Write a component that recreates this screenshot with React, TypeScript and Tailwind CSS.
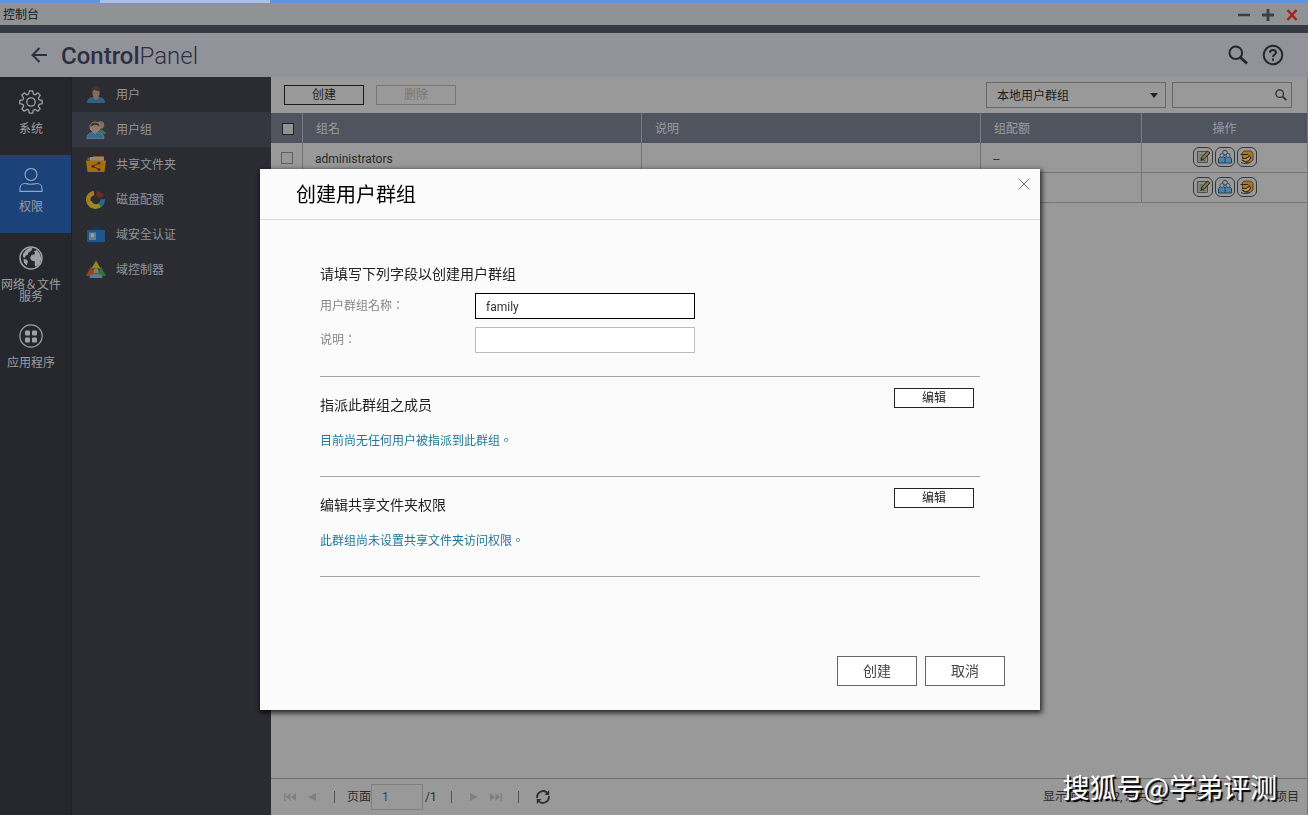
import React from 'react';
import clsx from 'clsx';

const GearIcon = () => (
  <svg viewBox="0 0 24 24" className="w-6 h-6" fill="none" stroke="#a0a1a4" strokeWidth="1.3" strokeLinejoin="round">
    <path d="M10.300.8h3.400l.6 3.200 1.800.8 2.700-1.900 2.400 2.400-1.900 2.700.8 1.800 3.100.6v3.300l-3.100.6-.8 1.800 1.900 2.700-2.400 2.400-2.700-1.900-1.800.8-.6 3.100h-3.400l-.6-3.100-1.800-.8-2.700 1.900-2.400-2.400 1.900-2.700-.8-1.800-3.100-.6v-3.300l3.100-.6.8-1.800-1.900-2.700 2.400-2.400 2.700 1.900 1.800-.8z" />
    <circle cx="12" cy="12" r="4.200" />
  </svg>
);

const PersonIcon = () => (
  <svg viewBox="0 0 24 24" className="w-6 h-6" fill="none" stroke="#93a5c4" strokeWidth="1.1">
    <circle cx="12" cy="6.5" r="6" />
    <path d="M1 23.4v-2.9c0-3 2.2-5 5-5 2 0 3.200.8 6 .8s4-.8 6-.8c2.800 0 5 2 5 5v2.900z" strokeLinejoin="round" />
  </svg>
);

const GlobeIcon = () => (
  <svg viewBox="0 0 24 24" className="w-6 h-6">
    <circle cx="12" cy="12" r="11" fill="none" stroke="#a0a1a4" strokeWidth="1.5" />
    <path d="M4 8 7 4l4-2.500 2.500 1L12 5 9.500 6.500 8.500 9 7 9.500 5.500 12 4 11z" fill="#a0a1a4" />
    <path d="M4.500 13l3 .5 1.500 2-1.500 4-2.500-3z" fill="#a0a1a4" />
    <path d="M14.500 5.500 18 4l3 4 1.500 5-2 5-3.500 3-1.500-2.500.5-3-3.500-1-1.500-2.500 1.500-3 3-.5.5-2z" fill="#a0a1a4" />
  </svg>
);

const AppsIcon = () => (
  <svg viewBox="0 0 24 24" className="w-6 h-6" fill="#a0a1a4">
    <circle cx="12" cy="12" r="11.200" fill="none" stroke="#a0a1a4" strokeWidth="1.200" />
    <rect x="6" y="6.500" width="5" height="5" rx="1" />
    <rect x="13" y="6.500" width="5" height="5" rx="1" />
    <rect x="6" y="13.500" width="5" height="5" rx="1" />
    <rect x="13" y="13.500" width="5" height="5" rx="1" />
  </svg>
);

const UserIcon = () => (
  <svg viewBox="0 0 20 20" className="w-5 h-5">
    <path d="M1 18c0-4 2-5.500 6-6h6c4 .5 6 2 6 6z" fill="#2f5f85" />
    <path d="M7.500 10.500h5v3L10 15l-2.500-1.500z" fill="#84685a" />
    <ellipse cx="10" cy="8" rx="3.600" ry="4.500" fill="#866b5c" />
    <path d="M5.500 8C5.500 3 7 1 10 1s4.500 2 4.500 7l-1-2C11 6 9 5.500 8 4.500L6.500 6.500z" fill="#43352e" />
  </svg>
);

const UserGroupIcon = () => (
  <svg viewBox="0 0 20 20" className="w-5 h-5">
    <circle cx="14.500" cy="5" r="3.800" fill="#86705d" />
    <path d="M12 9.500h4.500l4 4-3 1-5-2z" fill="#49684a" />
    <path d="M1 18.500c0-4 2-5.500 5.500-6H12c4 .5 6 2 6 6z" fill="#346c94" stroke="#7a8b95" strokeWidth=".6" />
    <circle cx="9" cy="7" r="5" fill="#94796a" stroke="#8f8f8a" />
    <path d="M4.500 7C4.500 3.500 6 2.500 9 2.500s4.500 1 4.500 4.500L12 5.500 8 5z" fill="#473a30" />
    <path d="M7 12h4l-2 2.500z" fill="#94796a" />
  </svg>
);

const ShareFolderIcon = () => (
  <svg viewBox="0 0 20 20" className="w-5 h-5">
    <path d="M1.500 2.500h5l1-1.500h10v4h-16z" fill="#865a13" />
    <path d="M4 2h14v4H4z" fill="#8d8982" />
    <path d="M0 5.500h20L18.500 17h-17z" fill="#a07013" />
    <path d="m13 8-6 3.300 6 3.200" fill="none" stroke="#5f2b18" />
    <circle cx="13" cy="8" r="1.500" fill="#5f2b18" />
    <circle cx="7" cy="11.300" r="1.600" fill="#5f2b18" />
    <circle cx="13" cy="14.500" r="1.500" fill="#5f2b18" />
  </svg>
);

const QuotaIcon = () => (
  <svg viewBox="0 0 20 20" className="w-5 h-5" fill="none" strokeWidth="4.500">
    <path d="M10 16.500A6.800 6.800 0 0 1 8 3" stroke="#a67c1c" />
    <path d="M3.500 11.500a6.800 6.800 0 0 0 10.500 3.700" stroke="#998a20" />
    <path d="M14 15.200a6.500 6.500 0 0 0 2.600-6" stroke="#25688a" />
    <path d="M10.500 3.500A6 6 0 0 1 15.500 7" stroke="#6e2d24" />
  </svg>
);

const DomainSecurityIcon = () => (
  <svg viewBox="0 0 20 20" className="w-5 h-5">
    <path d="M3 4l7-3.500L17 4v13l-7 2.500L3 17z" fill="#193350" />
    <rect x="1" y="5" width="18" height="12" rx="1" fill="#1d5688" />
    <rect x="3" y="7.500" width="7" height="7.500" fill="#687f90" />
    <rect x="5" y="8.500" width="3" height="3.500" fill="#93a1a9" />
  </svg>
);

const DomainControllerIcon = () => (
  <svg viewBox="0 0 20 20" className="w-5 h-5">
    <path d="M10 .5l4.500 8h-9z" fill="#958a20" />
    <path d="M5 6.500l5 9.500H0z" fill="#8f4822" />
    <path d="M15 6.500l5 9.500H10z" fill="#31733a" />
    <path d="M3.500 18c0-3 2-4 4-4h5c2 0 4 1 4 4z" fill="#5a7a8f" />
    <circle cx="10" cy="11" r="2.600" fill="#927868" />
  </svg>
);

const SearchIcon = ({ className }: { className: string }) => (
  <svg viewBox="0 0 20 20" className={className} fill="none" stroke="currentColor">
    <circle cx="7.800" cy="7.800" r="6.300" strokeWidth="2" />
    <path d="m12.500 12.500 6.500 6" strokeWidth="2.800" />
  </svg>
);

const EditIcon = () => (
  <svg viewBox="0 0 16 16" className="w-4 h-4">
    <path d="M2.500 2.500h10v11h-10z" fill="#868a82" stroke="#4b5048" />
    <path d="M4.500 6h3m-3 3h2m-2 2.500h6" stroke="#4f6b45" />
    <path d="m6 11 .8-3L12.500 2 15 4 9.300 10z" fill="#857148" stroke="#26261f" />
  </svg>
);

const MembersIcon = () => (
  <svg viewBox="0 0 16 16" className="w-4 h-4">
    <circle cx="8" cy="3.700" r="2.400" fill="#a39787" stroke="#34404a" />
    <path d="M1.500 14v-4.500l2-2h3L8 9l1.500-1.500h3l2 2V14z" fill="#4d83a8" stroke="#23435f" />
    <circle cx="5" cy="6.500" r="2" fill="#97a0a1" stroke="#23435f" strokeWidth=".8" />
    <circle cx="11" cy="6.500" r="2" fill="#97a0a1" stroke="#23435f" strokeWidth=".8" />
    <path d="M8 9v5" stroke="#23435f" />
  </svg>
);

const FolderHandIcon = () => (
  <svg viewBox="0 0 16 16" className="w-4 h-4">
    <path d="M3 4 5 2h7l2 2.500V11l-3 2.500H7L4 12z" fill="#a8742a" stroke="#4a3313" strokeWidth=".8" />
    <path d="M1.500 5.500H9L10.500 7M3 9.500h4l3-2 2 1-2.500 3.500-3 .5-4-1.500" fill="#b39a68" stroke="#2d2413" />
    <path d="M2 13.500c3 1.500 6 1.500 9 0" fill="none" stroke="#333" />
  </svg>
);

const categories = [
  { label: '系统', icon: <GearIcon /> },
  { label: '权限', icon: <PersonIcon />, active: true },
  { label: '网络＆文件服务', icon: <GlobeIcon /> },
  { label: '应用程序', icon: <AppsIcon /> },
];

const menuItems = [
  { label: '用户', icon: <UserIcon /> },
  { label: '用户组', icon: <UserGroupIcon />, active: true },
  { label: '共享文件夹', icon: <ShareFolderIcon /> },
  { label: '磁盘配额', icon: <QuotaIcon /> },
  { label: '域安全认证', icon: <DomainSecurityIcon /> },
  { label: '域控制器', icon: <DomainControllerIcon /> },
];

const groups = [
  { name: 'administrators', quota: '--' },
  { name: 'everyone', quota: '--' },
];

const actions = [
  { label: '编辑', icon: <EditIcon /> },
  { label: '成员', icon: <MembersIcon /> },
  { label: '共享文件夹', icon: <FolderHandIcon /> },
];

const TitleBar = () => (
  <>
    <div className="h-[3px] bg-[#5f96d8] flex">
      <div className="ml-[100px] w-[170px] bg-[#a9c0ea]" />
    </div>
    <div className="h-[22px] bg-[#8f9393] flex items-center justify-between pt-0.5 pl-[3px] pr-2.5 text-[#16181c]">
      <span>控制台</span>
      <div className="flex items-center gap-3">
        <button aria-label="最小化">
          <svg viewBox="0 0 12 12" className="w-3 h-3"><path d="M0 6h12" stroke="#3c3e44" strokeWidth="2.500" /></svg>
        </button>
        <button aria-label="最大化">
          <svg viewBox="0 0 12 12" className="w-3 h-3"><path d="M0 6h12M6 0v12" stroke="#3c3e44" strokeWidth="2.800" /></svg>
        </button>
        <button aria-label="关闭">
          <svg viewBox="0 0 12 12" className="w-3 h-3"><path d="m1.500 1 9 10m0-10-9 10" stroke="#a3221c" strokeWidth="2.400" /></svg>
        </button>
      </div>
    </div>
    <div className="h-2 bg-[#363a45]" />
  </>
);

const Header = () => (
  <header className="h-11 bg-[#92929b] flex items-center justify-between pl-[31px] pr-6 text-[#2c303d]">
    <div className="flex items-center gap-3.5">
      <button aria-label="返回">
        <svg viewBox="0 0 16 16" className="w-4 h-4" fill="none" stroke="currentColor" strokeWidth="2">
          <path d="M16 8H1.500M8.500 1l-7 7 7 7" />
        </svg>
      </button>
      <h1 className="pt-0.5 font-['Roboto',sans-serif] text-2xl font-light">
        <span className="font-medium">Control</span>Panel
      </h1>
    </div>
    <div className="flex items-center gap-3.5 text-[#23262e]">
      <button aria-label="搜索"><SearchIcon className="w-5 h-5" /></button>
      <button aria-label="帮助">
        <svg viewBox="0 0 22 22" className="w-[22px] h-[22px]" fill="none" stroke="currentColor" strokeWidth="2">
          <circle cx="11" cy="11" r="9.300" />
          <path d="M8 8.800c0-1.800 1.200-2.800 3-2.800s3 1 3 2.500c0 2-3 2.200-3 4.500M11 14.500v2.200" />
        </svg>
      </button>
    </div>
  </header>
);

const Sidebar = () => (
  <>
    <nav className="w-[72px] shrink-0 bg-[#26272c] border-r border-[#212227]">
      {categories.map((item) => (
        <a
          key={item.label}
          href="#"
          className={clsx(
            'h-[78px] flex flex-col items-center pt-[13px] pr-[9px] text-[#9c9da0]',
            item.active && 'bg-[#1c427a]'
          )}
        >
          {item.icon}
          <span className="mt-[9px] w-[62px] text-center leading-3">{item.label}</span>
        </a>
      ))}
    </nav>
    <nav className="w-[199px] shrink-0 bg-[#2b2c32]">
      {menuItems.map((item) => (
        <a
          key={item.label}
          href="#"
          className={clsx(
            'h-[35px] flex items-center gap-2.5 pl-3.5 text-[#929397]',
            item.active && 'bg-[#343740]'
          )}
        >
          {item.icon}
          {item.label}
        </a>
      ))}
    </nav>
  </>
);

const Toolbar = () => (
  <div className="h-9 shrink-0 flex items-center justify-between pl-[13px] pr-[15px]">
    <div className="flex gap-3">
      <button className="w-20 h-5 border border-[#1c1c1c] text-[#222] flex items-center justify-center">创建</button>
      <button disabled className="w-20 h-5 border border-[#777] text-[#777] flex items-center justify-center">删除</button>
    </div>
    <div className="flex gap-1.5">
      <div className="relative">
        <select aria-label="群组类型" className="appearance-none w-[180px] h-[26px] border border-[#686868] pl-2.5 pt-px text-[#1b1b1b]">
          <option>本地用户群组</option>
        </select>
        <svg viewBox="0 0 8 5" className="absolute right-2 top-[11px] w-2 h-[5px] pointer-events-none"><path d="M0 0h8L4 5z" fill="#222" /></svg>
      </div>
      <div className="w-[120px] h-[26px] border border-[#686868] flex items-center pr-1">
        <input type="search" aria-label="搜索群组" className="min-w-0 flex-1 px-2 outline-none" />
        <SearchIcon className="w-3 h-3 text-[#23262e]" />
      </div>
    </div>
  </div>
);

const thClass = 'h-[30px] p-0 pt-0.5 pl-[13px] border-l border-[#777b83] font-normal text-left';
const tdClass = 'h-[30px] p-0 pt-0.5 pl-3 border-l border-[#757575]';

const GroupTable = () => (
  <table className="w-full table-fixed border-separate border-spacing-0">
    <colgroup>
      <col className="w-[31px]" />
      <col />
      <col />
      <col className="w-[161px]" />
      <col className="w-[166px]" />
    </colgroup>
    <thead className="bg-[#4f545f] text-[#9b9da1]">
      <tr>
        <th className="p-0">
          <div className="flex justify-center pt-px pl-0.5">
            <input type="checkbox" aria-label="全选" className="appearance-none w-3 h-3 bg-[#929292] border border-[#202227]" />
          </div>
        </th>
        <th className={thClass}>组名</th>
        <th className={thClass}>说明</th>
        <th className={thClass}>组配额</th>
        <th className="h-[30px] p-0 pt-0.5 border-l border-[#777b83] font-normal text-center">操作</th>
      </tr>
    </thead>
    <tbody className="text-[#292929]">
      {groups.map((group) => (
        <tr key={group.name} className="[&>td]:border-b [&>td]:border-[#757575]">
          <td className="p-0">
            <div className="flex justify-center">
              <input type="checkbox" aria-label={group.name} className="appearance-none w-3 h-3 border border-[#5f5f5f]" />
            </div>
          </td>
          <td className={tdClass}>{group.name}</td>
          <td className={tdClass} />
          <td className={tdClass}>{group.quota}</td>
          <td className="h-[30px] p-0 pb-0.5 border-l border-[#757575]">
            <div className="flex justify-center gap-0.5">
              {actions.map((action) => (
                <button
                  key={action.label}
                  aria-label={action.label}
                  className="w-5 h-5 rounded-md border border-[#34373c] flex items-center justify-center"
                >
                  {action.icon}
                </button>
              ))}
            </div>
          </td>
        </tr>
      ))}
    </tbody>
  </table>
);

const Separator = () => <span className="w-px h-3 bg-[#555]" />;

const Pager = () => (
  <footer className="relative shrink-0 h-[37px] border-t border-[#6c6c6c] flex items-center justify-between pl-[13px] pr-2 text-[#2b2b2b]">
    <div className="flex items-center">
      <button disabled aria-label="第一页" className="text-[#808080]">
        <svg viewBox="0 0 12 10" className="w-3 h-2.5" fill="currentColor"><path d="M0 1h1.500v8H0zM6.500 1v8L2 5zM12 1v8L7 5z" /></svg>
      </button>
      <button disabled aria-label="上一页" className="ml-3 mr-[18px] text-[#808080]">
        <svg viewBox="0 0 8 10" className="w-2 h-2.5" fill="currentColor"><path d="M8 1v8L0 5z" /></svg>
      </button>
      <Separator />
      <label htmlFor="page" className="ml-3">页面</label>
      <input id="page" defaultValue="1" className="w-[52px] h-[26px] border border-[#808080] pl-2.5 text-[#1d4d70]" />
      <span className="ml-0.5 mr-3.5">/1</span>
      <Separator />
      <button disabled aria-label="下一页" className="ml-[18px] text-[#808080]">
        <svg viewBox="0 0 8 10" className="w-2 h-2.5" fill="currentColor"><path d="M0 1v8l8-4z" /></svg>
      </button>
      <button disabled aria-label="最后一页" className="ml-3 mr-4 text-[#808080]">
        <svg viewBox="0 0 12 10" className="w-3 h-2.5" fill="currentColor"><path d="M12 1h-1.500v8H12zM5.500 1v8L10 5zM0 1v8l5-4z" /></svg>
      </button>
      <Separator />
      <button aria-label="刷新" className="ml-4">
        <svg viewBox="0 0 16 16" className="w-4 h-4" fill="none" stroke="#2e2e2e" strokeWidth="1.800">
          <path d="M2.200 9A6 6 0 0 1 12.500 4M13.800 7A6 6 0 0 1 3.500 12" />
          <path d="M14.200 1v5H9.500zM1.800 15v-5h4.700z" fill="#2e2e2e" stroke="none" />
        </svg>
      </button>
    </div>
    <div className="flex items-center">
      <span>显示项目：1-2, 总共：2</span>
      <span className="ml-3.5 mr-3 w-px h-3 bg-[#555]" />
      <label htmlFor="page-size">显示</label>
      <select id="page-size" className="appearance-none w-[46px] ml-2.5 text-[#1d4d70]">
        <option>10</option>
      </select>
      <span>项目</span>
    </div>
    <div className="absolute right-[30px] bottom-2 text-[27px] leading-10 font-['Noto_Sans_CJK_SC',sans-serif] text-white whitespace-nowrap pointer-events-none [text-shadow:2px_2px_1px_#000]">
      搜狐号@学弟评测
    </div>
  </footer>
);

const DialogSection = ({ title, text }: { title: string; text: string }) => (
  <section className="h-[100px] border-b border-[#a4a4a4] flex justify-between items-start pr-1.5">
    <div className="pt-[18px]">
      <h3 className="text-sm leading-5 text-[#222]">{title}</h3>
      <p className="mt-4 leading-5 text-[#1f7894]">{text}</p>
    </div>
    <button className="mt-[11px] w-20 h-5 bg-white border border-[#222] text-[#222] flex items-center justify-center">编辑</button>
  </section>
);

const CreateGroupDialog = () => (
  <div className="fixed inset-0 flex items-center justify-center pt-16 pr-2">
    <div
      role="dialog"
      aria-labelledby="dialog-title"
      className="w-[780px] bg-[#fbfbfb] shadow-[1px_2px_5px_1px_rgba(0,0,0,0.75)]"
    >
      <div className="h-[51px] border-b border-[#dadada] flex items-center justify-between pl-9 pr-2.5">
        <h2 id="dialog-title" className="pt-0.5 text-xl text-black">创建用户群组</h2>
        <button aria-label="关闭" className="mb-5">
          <svg viewBox="0 0 12 12" className="w-3 h-3" stroke="#777"><path d="m.5.5 11 11m0-11-11 11" /></svg>
        </button>
      </div>
      <div className="px-[60px] pt-11">
        <div className="border-b border-[#a4a4a4] pb-[23px]">
          <h3 className="text-sm leading-5 text-[#222]">请填写下列字段以创建用户群组</h3>
          <div className="mt-[9px] flex flex-col gap-2 text-[#858585]">
            <div className="flex items-center">
              <label htmlFor="group-name" className="w-[155px]">用户群组名称：</label>
              <input id="group-name" defaultValue="family" className="w-[220px] h-[26px] bg-white border border-black px-2.5 pt-px text-[#333] outline-none" />
            </div>
            <div className="flex items-center">
              <label htmlFor="group-desc" className="w-[155px]">说明：</label>
              <input id="group-desc" className="w-[220px] h-[26px] bg-white border border-[#bdbdbd] px-2.5 pt-px text-[#333] outline-none" />
            </div>
          </div>
        </div>
        <DialogSection title="指派此群组之成员" text="目前尚无任何用户被指派到此群组。" />
        <DialogSection title="编辑共享文件夹权限" text="此群组尚未设置共享文件夹访问权限。" />
      </div>
      <div className="flex justify-end gap-2 pt-[79px] pb-6 pr-[35px] text-sm text-[#444]">
        <button className="w-20 h-[30px] bg-white border border-[#666]">创建</button>
        <button className="w-20 h-[30px] bg-white border border-[#666]">取消</button>
      </div>
    </div>
  </div>
);

const App: React.FC = () => {
  return (
    <div className="min-h-screen flex flex-col bg-[#999] text-xs font-['Roboto','Noto_Sans_CJK_TC',sans-serif]">
      <TitleBar />
      <Header />
      <div className="flex-1 flex">
        <Sidebar />
        <main className="flex-1 min-w-0 flex flex-col border-r border-[#757575]">
          <Toolbar />
          <GroupTable />
          <div className="flex-1" />
          <Pager />
        </main>
      </div>
      <CreateGroupDialog />
    </div>
  );
};

export default App;
